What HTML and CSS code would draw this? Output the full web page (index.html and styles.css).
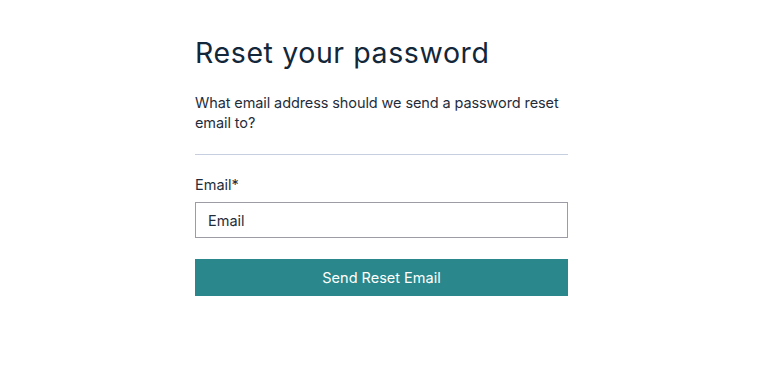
FILE: index.html
```html
<!DOCTYPE html>
<html lang="en">
<head>
<meta charset="utf-8">
<title>Reset your password</title>
<link rel="stylesheet" href="styles.css">
</head>
<body>
<main class="page">
  <form class="card">
    <h1 class="title">Reset your password</h1>
    <p class="intro">What email address should we send a password reset email to?</p>
    <hr class="divider">
    <label class="label" for="email">Email*</label>
    <input class="input" id="email" type="email" placeholder="Email">
    <button class="button" type="button">Send Reset Email</button>
  </form>
</main>
</body>
</html>
```

FILE: styles.css
```css
* { box-sizing: border-box; }
html, body { margin: 0; padding: 0; background: #ffffff; }
body {
  font-family: "Inter", "Noto Sans", sans-serif;
  color: #1c2a38;
}
.page {
  display: flex;
  justify-content: flex-start;
  padding: 36px 0 0 195px;
}
.card {
  width: 373px;
  display: flex;
  flex-direction: column;
}
.title {
  margin: 0;
  font-size: 28.5px;
  line-height: 34px;
  font-weight: 400;
  color: #13273a;
  letter-spacing: 0.6px;
}
.intro {
  margin: 23px 0 0;
  font-size: 14.5px;
  line-height: 20px;
  color: #1f2d3b;
  letter-spacing: -0.1px;
}
.divider {
  margin: 21px 0 0;
  border: 0;
  border-top: 1px solid #c6cfdf;
  height: 0;
}
.label {
  margin-top: 20px;
  font-size: 14.5px;
  line-height: 20px;
  color: #1f2d3b;
}
.input {
  margin-top: 7px;
  height: 36px;
  border: 1px solid #9d9ca4;
  border-radius: 0;
  padding: 0 12px;
  font-family: inherit;
  font-size: 14.5px;
  color: #1f2d3b;
  outline: none;
}
.input::placeholder { color: #1f2d3b; opacity: 1; }
.button {
  margin-top: 21px;
  height: 37px;
  border: 0;
  border-radius: 0;
  background: #2a878b;
  color: #ffffff;
  font-family: inherit;
  font-size: 14.5px;
  cursor: pointer;
}
```
